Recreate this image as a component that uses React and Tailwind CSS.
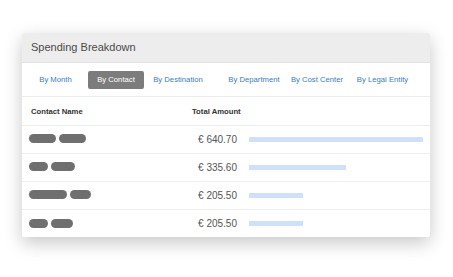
export default function App() {
  const tabs = [
    { label: "By Month", w: "w-[51px]", ml: "ml-[8px]" },
    { label: "By Contact", w: "w-[56px]", ml: "ml-[7px]", active: true },
    { label: "By Destination", w: "w-[68px]", ml: "" },
    { label: "By Department", w: "w-[84px]", ml: "" },
    { label: "By Cost Center", w: "w-[42px]", ml: "" },
    { label: "By Legal Entity", w: "w-[89px]", ml: "" },
  ];
  const rows = [
    { pills: ["w-[27px]", "w-[27px]"], amount: "€ 640.70", bar: "w-[174px]" },
    { pills: ["w-[19px]", "w-[24px]"], amount: "€ 335.60", bar: "w-[97px]" },
    { pills: ["w-[38px]", "w-[21px]"], amount: "€ 205.50", bar: "w-[54px]" },
    { pills: ["w-[19px]", "w-[22px]"], amount: "€ 205.50", bar: "w-[54px]" },
  ];
  return (
    <div className="w-[453px] h-[277px] bg-white pt-[33px] pl-[22px] font-['Liberation_Sans',Arial,sans-serif]">
      <div className="w-[408px] h-[204px] bg-white overflow-hidden shadow-[0_6px_18px_rgba(0,0,0,0.22)] rounded-[2px]">
        <div className="h-[30px] bg-[#ededed] border-b border-[#e2e2e2] flex items-center pl-[9px] text-[11px] text-[#4a4a4a]">
          Spending Breakdown
        </div>
        <div className="h-[34px] border-b border-[#ececec] flex items-center">
          {tabs.map((t) => (
            <div
              key={t.label}
              className={`${t.w} ${t.ml} h-[18px] flex items-center justify-center whitespace-nowrap text-[7.7px] font-medium ${
                t.active ? "bg-[#7c7c7c] text-white rounded-[2px]" : "text-[#3a7bc8]"
              }`}
            >
              {t.label}
            </div>
          ))}
        </div>
        <div className="h-[29px] border-b border-[#ececec] flex items-end pb-[7px] text-[7.7px] font-bold text-[#333]">
          <div className="w-[170px] pl-[9px]">Contact Name</div>
          <div className="w-[49px] whitespace-nowrap">Total Amount</div>
        </div>
        {rows.map((r, i) => (
          <div
            key={i}
            className={`h-[28px] flex items-center ${i < rows.length - 1 ? "border-b border-[#efefef]" : ""}`}
          >
            <div className="w-[170px] pl-[7px] flex gap-[3px] pb-[2px]">
              {r.pills.map((p, j) => (
                <div key={j} className={`${p} h-[9px] rounded-full bg-[#6f6f6f]`} />
              ))}
            </div>
            <div className="w-[49px] pr-[4px] text-right text-[10px] text-[#555] whitespace-nowrap pb-[1px]">
              {r.amount}
            </div>
            <div className="pl-[8px] pb-[1px]">
              <div className={`${r.bar} h-[5px] bg-[#cfe0fa]`} />
            </div>
          </div>
        ))}
      </div>
    </div>
  );
}
